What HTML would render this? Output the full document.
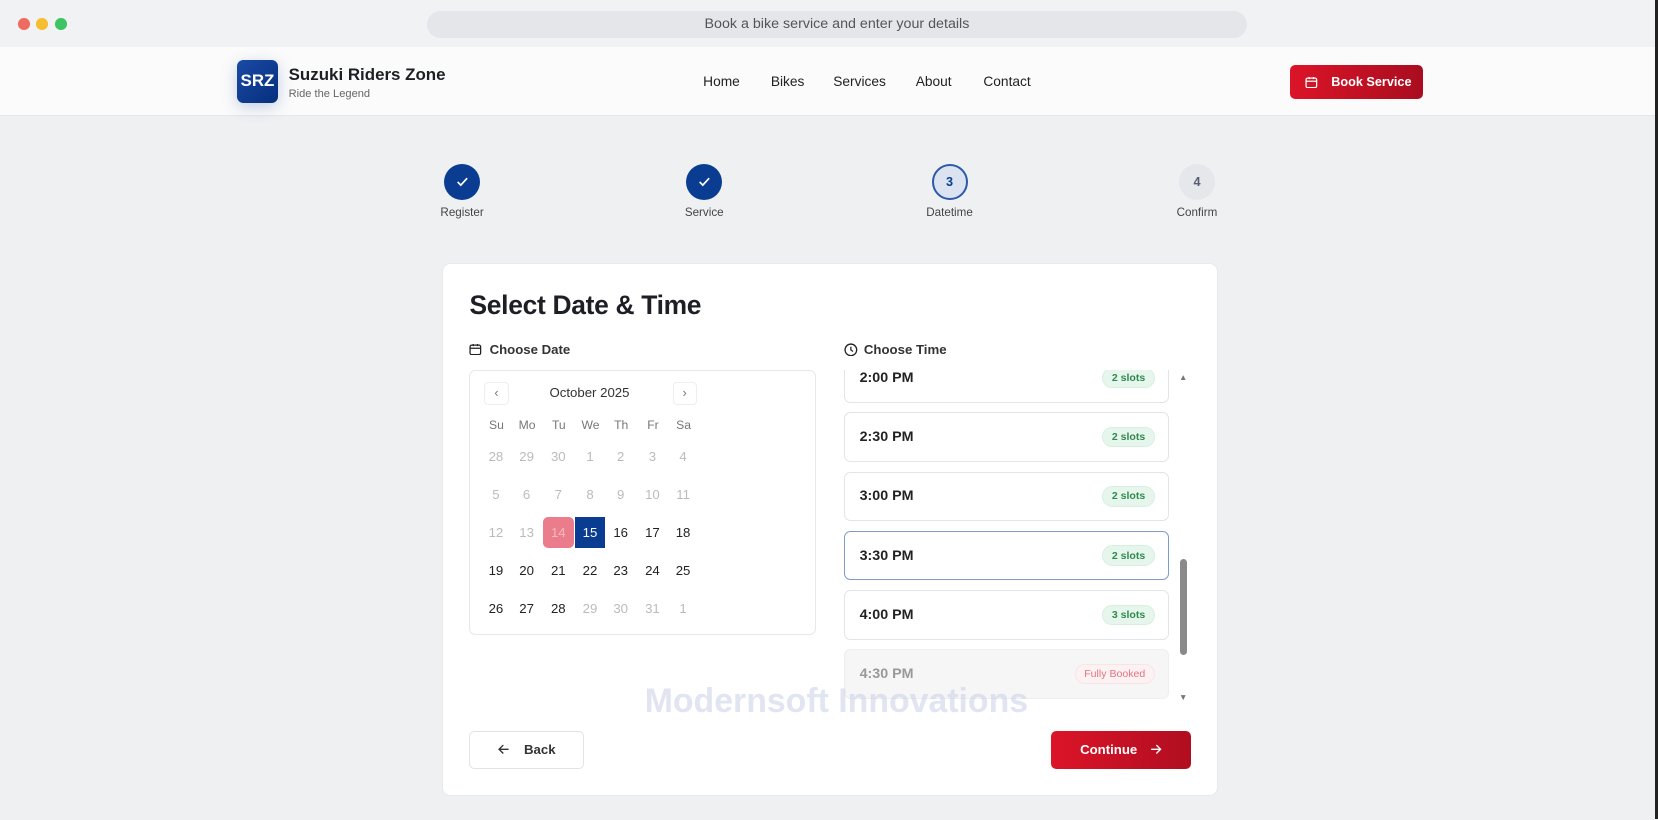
<!DOCTYPE html>
<html><head><meta charset="utf-8"><style>
html{zoom:1.0574}
*{box-sizing:border-box;margin:0;padding:0}
body{width:1568px;height:775px;overflow:hidden;background:#eff0f2;font-family:"Liberation Sans",sans-serif;color:#1d1f24;position:relative}
.a{position:absolute}
.dot{width:11px;height:11px;border-radius:50%;top:17px}
.nav{top:70px;font-size:13px;color:#222}
.step{width:34px;height:34px;border-radius:50%;top:155px;display:flex;align-items:center;justify-content:center}
.sl{top:195px;font-size:11px;color:#444;width:100px;text-align:center}
.d{width:29px;height:29px;display:flex;align-items:center;justify-content:center;font-size:12.5px;color:#222}
.g{color:#bbb}
.slot{left:0;width:308px;height:47px;border:1.5px solid #e3e4e6;border-radius:6px;background:#fff;display:flex;align-items:center;justify-content:space-between;padding:0 13px 0 14px;font-size:13.5px;font-weight:bold;color:#222}
.bd{font-size:10px;font-weight:bold;color:#2f8a4e;background:#e6f6ec;border:1px solid #d6f0df;border-radius:10px;padding:3px 8px}
</style></head><body>
<div class="a" style="left:0;top:0;width:1568px;height:44px;background:#f1f2f4"></div>
<div class="a dot" style="left:17px;background:#ef6b5f"></div>
<div class="a dot" style="left:34px;background:#f5bd2f"></div>
<div class="a dot" style="left:52px;background:#3fc463"></div>
<div class="a" style="left:404px;top:10px;width:775px;height:26px;background:#e4e6ea;border-radius:13px;text-align:center;line-height:26px;font-size:13.5px;color:#555">Book a bike service and enter your details</div>
<div class="a" style="left:1565px;top:0;width:3px;height:775px;background:#222"></div>

<div class="a" style="left:0;top:44px;width:1565px;height:66px;background:#fbfbfb;border-bottom:1px solid #e6e7ea"></div>
<div class="a" style="left:224px;top:57px;width:39px;height:40px;border-radius:6px;background:linear-gradient(135deg,#1a4aa6,#062f7c);color:#fff;font-weight:bold;font-size:16px;display:flex;align-items:center;justify-content:center;box-shadow:0 4px 14px rgba(30,70,160,.25)">SRZ</div>
<div class="a" style="left:273px;top:61px;font-size:16px;font-weight:bold">Suzuki Riders Zone</div>
<div class="a" style="left:273px;top:83px;font-size:10.5px;color:#666">Ride the Legend</div>
<div class="a nav" style="left:665px">Home</div>
<div class="a nav" style="left:729px">Bikes</div>
<div class="a nav" style="left:788px">Services</div>
<div class="a nav" style="left:866px">About</div>
<div class="a nav" style="left:930px">Contact</div>
<div class="a" style="left:1220px;top:61px;width:126px;height:33px;border-radius:5px;background:linear-gradient(90deg,#dc1428,#a90d1f);color:#fff;font-size:12px;font-weight:bold;display:flex;align-items:center;padding-left:14px;gap:13px">
<svg width="12" height="12" viewBox="0 0 12 12" fill="none" stroke="#fff" stroke-width="1.2"><rect x="1" y="2" width="10" height="9" rx="1.5"/><path d="M1 5h10M4 1v2M8 1v2"/></svg>Book Service</div>

<div class="a step" style="left:420px;background:#0a3d91"><svg width="14" height="14" viewBox="0 0 14 14" fill="none" stroke="#fff" stroke-width="1.6"><path d="M2.5 7.5l3 3 6-6.5"/></svg></div>
<div class="a step" style="left:649px;background:#0a3d91"><svg width="14" height="14" viewBox="0 0 14 14" fill="none" stroke="#fff" stroke-width="1.6"><path d="M2.5 7.5l3 3 6-6.5"/></svg></div>
<div class="a step" style="left:881px;background:#dbe3f0;border:2px solid #2b5aa8;color:#0a3d91;font-weight:bold;font-size:12px">3</div>
<div class="a step" style="left:1115px;background:#e5e7eb;color:#555e6e;font-weight:bold;font-size:12px">4</div>
<div class="a sl" style="left:387px">Register</div>
<div class="a sl" style="left:616px">Service</div>
<div class="a sl" style="left:848px">Datetime</div>
<div class="a sl" style="left:1082px">Confirm</div>

<div class="a" style="left:418px;top:249px;width:734px;height:504px;background:#fff;border-radius:8px;border:1px solid #e8e9ec"></div>
<div class="a" style="left:444px;top:274px;font-size:25px;font-weight:bold;letter-spacing:-.3px">Select Date &amp; Time</div>
<svg class="a" style="left:444px;top:324px" width="12" height="12" viewBox="0 0 12 12" fill="none" stroke="#222" stroke-width="1.2"><rect x="1" y="2" width="10" height="9" rx="1.5"/><path d="M1 5h10M4 1v2M8 1v2"/></svg>
<div class="a" style="left:463px;top:323px;font-size:12.5px;font-weight:bold;color:#333">Choose Date</div>
<svg class="a" style="left:798px;top:324px" width="13" height="13" viewBox="0 0 13 13" fill="none" stroke="#222" stroke-width="1.2"><circle cx="6.5" cy="6.5" r="5.5"/><path d="M6.5 3.5v3l2 1.5"/></svg>
<div class="a" style="left:817px;top:323px;font-size:12.5px;font-weight:bold;color:#333">Choose Time</div>

<div class="a" style="left:444px;top:350px;width:328px;height:251px;border:1px solid #e6e7ea;border-radius:6px"></div>
<div class="a" style="left:458px;top:361px;width:23px;height:22px;border:1px solid #eee;border-radius:4px;text-align:center;line-height:20px;color:#777;font-size:12px">‹</div>
<div class="a" style="left:636px;top:361px;width:23px;height:22px;border:1px solid #eee;border-radius:4px;text-align:center;line-height:20px;color:#777;font-size:12px">›</div>
<div class="a" style="left:490px;top:364px;width:135px;text-align:center;font-size:12.5px;color:#333">October 2025</div>
<div id="cal"></div>

<div class="a" style="left:798px;top:350px;width:310px;height:312px;overflow:hidden">
<div class="a slot" style="top:-16px"><span>2:00 PM</span><span class="bd">2 slots</span></div>
<div class="a slot" style="top:40px"><span>2:30 PM</span><span class="bd">2 slots</span></div>
<div class="a slot" style="top:96px"><span>3:00 PM</span><span class="bd">2 slots</span></div>
<div class="a slot" style="top:152px;border-color:#7d9cc9"><span>3:30 PM</span><span class="bd">2 slots</span></div>
<div class="a slot" style="top:208px"><span>4:00 PM</span><span class="bd">3 slots</span></div>
<div class="a slot" style="top:264px;background:#f6f6f7;color:#999;border-color:#eee"><span>4:30 PM</span><span class="bd" style="color:#e2737d;background:#fdf2f3;border-color:#fbe3e5;font-weight:normal">Fully Booked</span></div>
</div>
<div class="a" style="left:1115px;top:352px;font-size:8px;color:#777">▲</div>
<div class="a" style="left:1115px;top:654px;font-size:8px;color:#777">▼</div>
<div class="a" style="left:1116px;top:529px;width:7px;height:90px;background:#8a8a8a;border-radius:4px"></div>

<div class="a" style="left:560px;top:645px;width:462px;text-align:center;font-size:32px;font-weight:bold;color:rgba(200,205,230,.55)">Modernsoft Innovations</div>

<div class="a" style="left:444px;top:691px;width:108px;height:36px;border:1px solid #e2e3e6;border-radius:5px;display:flex;align-items:center;justify-content:center;gap:14px;font-size:12.5px;font-weight:bold;color:#333"><svg width="11" height="10" viewBox="0 0 11 10" fill="none" stroke="#333" stroke-width="1.3"><path d="M10 5H1M5 1L1 5l4 4"/></svg>Back</div>
<div class="a" style="left:994px;top:691px;width:132px;height:36px;border-radius:5px;background:linear-gradient(90deg,#dc1428,#b00e20);display:flex;align-items:center;justify-content:center;gap:12px;font-size:12.5px;font-weight:bold;color:#fff">Continue<svg width="11" height="10" viewBox="0 0 11 10" fill="none" stroke="#fff" stroke-width="1.3"><path d="M1 5h9M6 1l4 4-4 4"/></svg></div>

<script>
var xs=[469,498,528,558,587,617,646],h=["Su","Mo","Tu","We","Th","Fr","Sa"],s="";
h.forEach(function(t,i){s+='<div class="a d" style="left:'+(xs[i]-14)+'px;top:387px;color:#777;font-size:11.5px">'+t+'</div>'});
var rows=[[28,29,30,1,2,3,4],[5,6,7,8,9,10,11],[12,13,14,15,16,17,18],[19,20,21,22,23,24,25],[26,27,28,29,30,31,1]];
rows.forEach(function(r,ri){r.forEach(function(n,i){var gr=ri<2||(ri==2&&i<2)||(ri==4&&i>2);var st='left:'+(xs[i]-14.5)+'px;top:'+(417+ri*36)+'px;';var c='a d'+(gr?' g':'');
if(ri==2&&i==2){st+='background:#ea7c8b;color:#f7b9c1;border-radius:5px;'}
if(ri==2&&i==3){st+='background:#0a3d91;color:#fff;'}
s+='<div class="'+c+'" style="'+st+'">'+n+'</div>'})});
document.getElementById('cal').innerHTML=s;
</script>
</body></html>
